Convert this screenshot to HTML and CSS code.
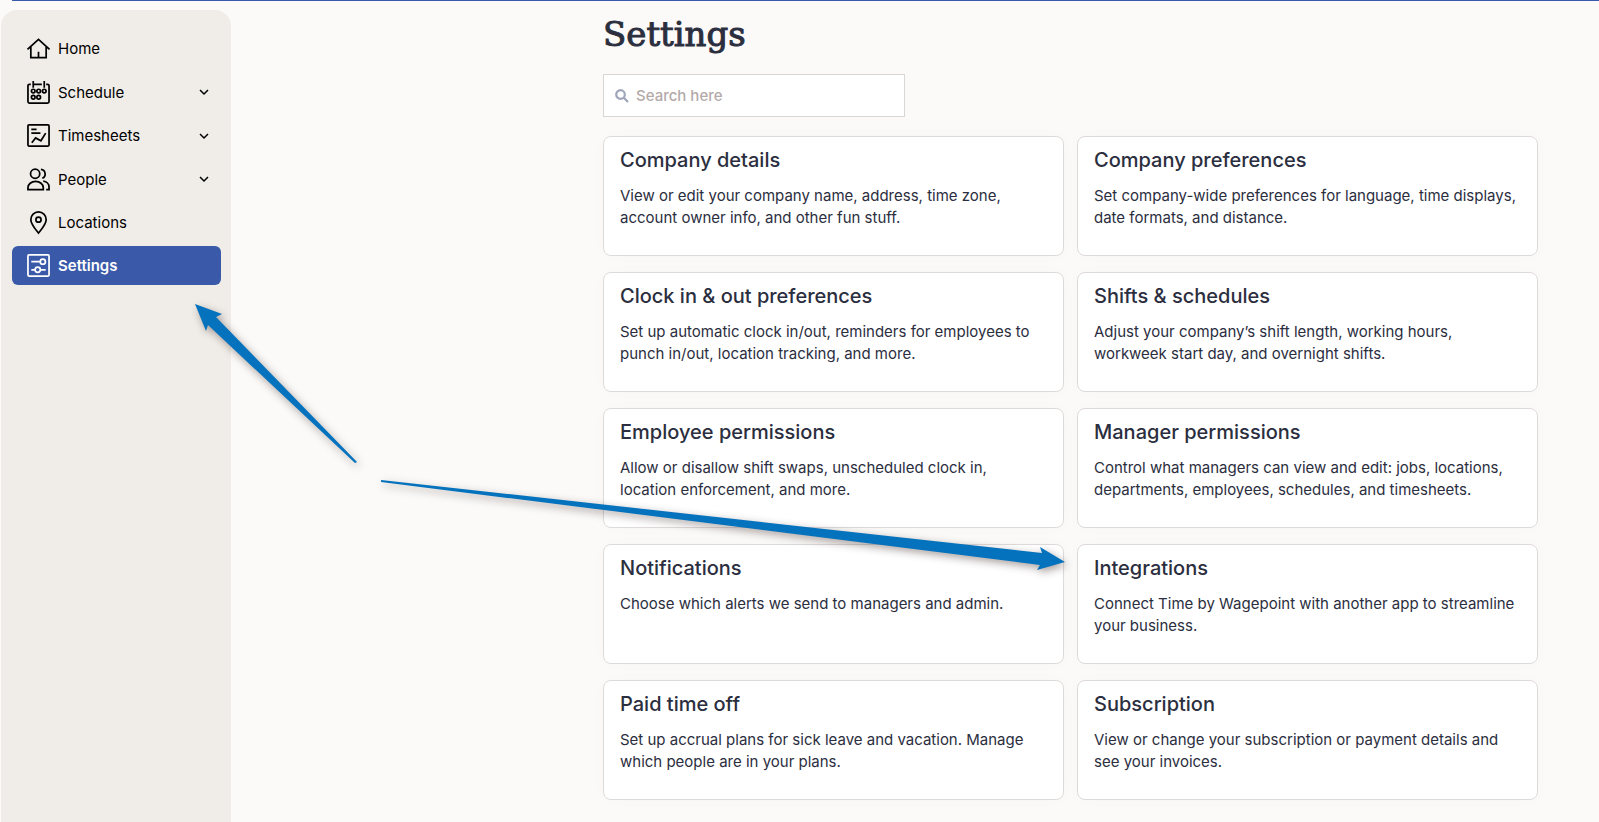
FILE: index.html
```html
<!DOCTYPE html>
<html lang="en">
<head>
    <meta charset="UTF-8">
    <meta name="viewport" content="width=device-width, initial-scale=1.0">
    <title>Settings</title>
    <link rel="stylesheet" href="styles.css">
</head>
<body>
    <div class="top-line"></div>
    <div class="layout">
        <nav class="sidebar">
            <a class="nav-item" href="#">
                <svg class="nav-icon" viewBox="0 0 24 24"><path d="M.5 13 12 2.500 23.500 13M4 10.500V21.500h16V10.500M12 15.500V21"/></svg>
                <span>Home</span>
            </a>
            <button class="nav-item expandable" type="button">
                <svg class="nav-icon" viewBox="0 0 24 24"><path d="M4 3.500H2.500A1.500 1.500 0 0 0 1 5v16.500A1.500 1.500 0 0 0 2.500 23h19a1.500 1.500 0 0 0 1.500-1.500V5a1.500 1.500 0 0 0-1.500-1.500H20M6.500 0v7M6.500 3.500h9M18 0v7"/><circle cx="6.500" cy="10.500" r="1.900"/><circle cx="12.200" cy="10.500" r="1.900"/><circle cx="18" cy="10.500" r="1.900"/><circle cx="6.500" cy="17" r="1.900"/><circle cx="12.200" cy="17" r="1.900"/></svg>
                <span>Schedule</span>
                <svg class="chevron" viewBox="0 0 10 10"><path d="M1 3l4 4 4-4"/></svg>
            </button>
            <button class="nav-item" type="button">
                <svg class="nav-icon" viewBox="0 0 24 24"><rect x="1" y="1" width="22" height="22" rx="1"/><path d="M4.500 5.500H10M4.500 9.500H14M5 19.500l4-5 5.500 3 5-8"/></svg>
                <span>Timesheets</span>
                <svg class="chevron" viewBox="0 0 10 10"><path d="M1 3l4 4 4-4"/></svg>
            </button>
            <button class="nav-item expandable" type="button">
                <svg class="nav-icon" viewBox="0 0 24 24"><circle cx="8.500" cy="6" r="4.800"/><path d="M1 22.500v-2a8 6.500 0 0 1 16 0v2zM14.500 1.500a4.800 4.800 0 0 1 1.500 9.200M17 13.800c3.500.4 6 3 6 6.200v2.500h-3"/></svg>
                <span>People</span>
                <svg class="chevron" viewBox="0 0 10 10"><path d="M1 3l4 4 4-4"/></svg>
            </button>
            <a class="nav-item" href="#">
                <svg class="nav-icon" viewBox="0 0 24 24"><path d="M12 23C8 18 4 13.500 4 9a8 8 0 0 1 16 0c0 4.500-4 9-8 14z"/><circle cx="12" cy="9" r="2.700"/></svg>
                <span>Locations</span>
            </a>
            <a class="nav-item active" href="#" aria-current="page">
                <svg class="nav-icon" viewBox="0 0 24 24"><rect x="1" y="1" width="22" height="22" rx="1"/><path d="M4.500 8H14M4.500 16.500h4M14 16.500h5.500"/><circle cx="16.500" cy="8" r="2.700"/><circle cx="11.200" cy="16.500" r="2.700"/></svg>
                <span>Settings</span>
            </a>
        </nav>

        <main class="content">
            <h1>Settings</h1>
            <label class="search">
                <svg class="search-icon" viewBox="0 0 14 14"><circle cx="5.500" cy="5.500" r="4.300"/><path d="M8.800 8.800l4.200 4.200"/></svg>
                <input type="search" placeholder="Search here" aria-label="Search here">
            </label>
            <div class="cards">
                <a class="card" href="#">
                    <h2>Company details</h2>
                    <p>View or edit your company name, address, time zone, account owner info, and other fun stuff.</p>
                </a>
                <a class="card" href="#">
                    <h2>Company preferences</h2>
                    <p>Set company-wide preferences for language, time displays, date formats, and distance.</p>
                </a>
                <a class="card" href="#">
                    <h2>Clock in &amp; out preferences</h2>
                    <p>Set up automatic clock in/out, reminders for employees to punch in/out, location tracking, and more.</p>
                </a>
                <a class="card" href="#">
                    <h2>Shifts &amp; schedules</h2>
                    <p>Adjust your company’s shift length, working hours, workweek start day, and overnight shifts.</p>
                </a>
                <a class="card" href="#">
                    <h2>Employee permissions</h2>
                    <p>Allow or disallow shift swaps, unscheduled clock in, location enforcement, and more.</p>
                </a>
                <a class="card" href="#">
                    <h2>Manager permissions</h2>
                    <p>Control what managers can view and edit: jobs, locations, departments, employees, schedules, and timesheets.</p>
                </a>
                <a class="card" href="#">
                    <h2>Notifications</h2>
                    <p>Choose which alerts we send to managers and admin.</p>
                </a>
                <a class="card" href="#">
                    <h2>Integrations</h2>
                    <p>Connect Time by Wagepoint with another app to streamline your business.</p>
                </a>
                <a class="card" href="#">
                    <h2>Paid time off</h2>
                    <p>Set up accrual plans for sick leave and vacation. Manage which people are in your plans.</p>
                </a>
                <a class="card" href="#">
                    <h2>Subscription</h2>
                    <p>View or change your subscription or payment details and see your invoices.</p>
                </a>
            </div>
        </main>
    </div>

    <!-- arrows pointing at the Settings link and the Integrations card -->
    <svg class="arrows" viewBox="0 0 1080 600" aria-hidden="true">
        <path d="M195 304L222 314L216 317L357 462L355 463L208 325L206 331Z"/>
        <path d="M381 480L1042 553L1040 547L1065 562L1037 570L1040 565L381 482Z"/>
    </svg>
</body>
</html>
```

FILE: styles.css
```css
* {
    box-sizing: border-box;
}
body {
    margin: 0;
    font-family: Inter, "Liberation Sans", sans-serif;
    font-size: 15px;
    color: #2b2e3e;
    background-color: #fbfaf8;
}
.top-line {
    height: 1px;
    margin-left: 12px;
    background-color: #3a5aa9;
}
.layout {
    display: flex;
    min-height: calc(100vh - 1px);
}

/* sidebar */
.sidebar {
    display: flex;
    flex-direction: column;
    gap: 4px;
    flex: 0 0 230px;
    margin: 9px 0 0 1px;
    padding: 19px 10px 18px 11px;
    background-color: #f0ede8;
    border-radius: 16px 16px 0 0;
}
.nav-item {
    display: flex;
    align-items: center;
    gap: 8px;
    height: 39px;
    padding: 0 12px 0 15px;
    border: none;
    border-radius: 6px;
    background: none;
    font-family: inherit;
    font-size: 15px;
    color: #000;
    text-decoration: none;
    cursor: pointer;
}
.nav-item.expandable {
    height: 40px;
}
.nav-item.active {
    background-color: #3a5aa9;
    color: #fff;
    font-weight: 600;
}
.nav-icon {
    width: 23px;
    height: 23px;
    fill: none;
    stroke: currentColor;
    stroke-width: 1.8;
    overflow: visible;
}
.chevron {
    width: 10px;
    height: 10px;
    margin-left: auto;
    fill: none;
    stroke: currentColor;
    stroke-width: 1.5;
}

/* main area */
.content {
    flex: 1;
    padding: 9px 61px 20px 372px;
}
h1 {
    margin: 0 0 16px;
    font-family: "DejaVu Serif", serif;
    font-size: 34px;
    font-weight: 400;
    line-height: 48px;
    -webkit-text-stroke: 1px #2b2e3e;
}
.search {
    display: flex;
    align-items: center;
    gap: 7px;
    width: 302px;
    height: 43px;
    margin-bottom: 19px;
    padding: 0 11px;
    border: 1px solid #dad6d5;
    background-color: #fff;
}
.search-icon {
    width: 14px;
    height: 14px;
    fill: none;
    stroke: #9fa5bb;
    stroke-width: 2.2;
}
.search input {
    flex: 1;
    min-width: 0;
    padding: 0;
    border: none;
    outline: none;
    background: none;
    font-family: inherit;
    font-size: 15px;
    font-weight: 500;
    color: #2b2e3e;
}
.search input::placeholder {
    color: #b3a9a8;
}
.cards {
    display: grid;
    grid-template-columns: 1fr 1fr;
    gap: 16px 13px;
}
.card {
    min-height: 120px;
    padding: 9px 16px;
    border: 1px solid #dedada;
    border-radius: 8px;
    background-color: #fff;
    box-shadow: 0 0 16px rgba(0, 0, 0, 0.02);
    color: inherit;
    text-decoration: none;
}
.card h2 {
    margin: 0 0 11px;
    font-size: 20px;
    font-weight: 500;
    line-height: 28px;
}
.card p {
    margin: 0;
    line-height: 22px;
}

.arrows {
    position: absolute;
    top: 0;
    left: 0;
    width: 1080px;
    height: 600px;
    fill: #0572bd;
    filter: drop-shadow(2px 3px 4px rgba(60, 40, 40, 0.45));
    pointer-events: none;
}

@media (max-width: 1300px) {
    .content {
        padding-left: 61px;
    }
}
```
